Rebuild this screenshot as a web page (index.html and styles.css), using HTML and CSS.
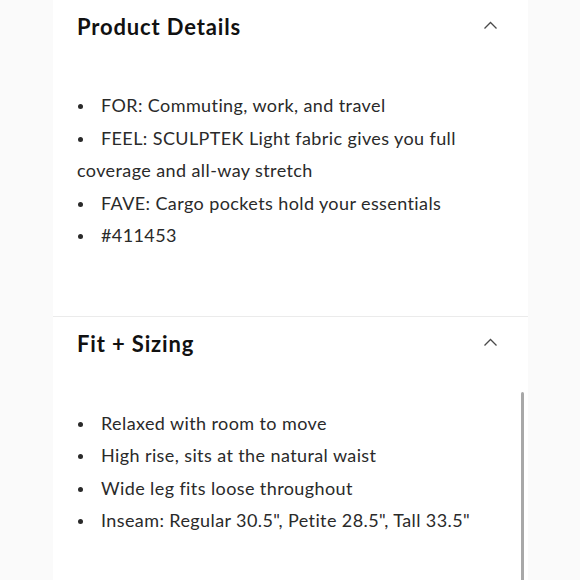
FILE: index.html
```html
<!DOCTYPE html>
<html>
<head>
<meta charset="utf-8">
<link rel="stylesheet" href="styles.css">
</head>
<body>
<div class="panel">
  <section class="acc">
    <div class="acc-head">
      <h2 class="acc-title">Product Details</h2>
      <svg class="chev" width="15" height="9" viewBox="0 0 15 9"><path d="M1.5 7.5 L7.5 1.5 L13.5 7.5" fill="none" stroke="#4a4a4a" stroke-width="1.3"/></svg>
    </div>
    <div class="acc-body">
      <p class="item"><span class="dot"></span>FOR: Commuting, work, and travel</p>
      <p class="item"><span class="dot"></span>FEEL: SCULPTEK Light fabric gives you full coverage and all-way stretch</p>
      <p class="item"><span class="dot"></span>FAVE: Cargo pockets hold your essentials</p>
      <p class="item"><span class="dot"></span>#411453</p>
    </div>
  </section>
  <section class="acc acc-second">
    <div class="acc-head">
      <h2 class="acc-title">Fit + Sizing</h2>
      <svg class="chev" width="15" height="9" viewBox="0 0 15 9"><path d="M1.5 7.5 L7.5 1.5 L13.5 7.5" fill="none" stroke="#4a4a4a" stroke-width="1.3"/></svg>
    </div>
    <div class="acc-body">
      <p class="item"><span class="dot"></span>Relaxed with room to move</p>
      <p class="item"><span class="dot"></span>High rise, sits at the natural waist</p>
      <p class="item"><span class="dot"></span>Wide leg fits loose throughout</p>
      <p class="item"><span class="dot"></span>Inseam: Regular 30.5", Petite 28.5", Tall 33.5"</p>
    </div>
  </section>
  <div class="scrollbar"></div>
</div>
</body>
</html>
```
FILE: styles.css
```css
html, body {
  margin: 0;
  padding: 0;
  background: #fafafa;
  height: 580px;
  overflow: hidden;
}
.panel {
  position: relative;
  margin-left: 53px;
  width: 475px;
  height: 580px;
  background: #fff;
  font-family: "Lato", "Liberation Sans", sans-serif;
  color: #2a2a2a;
}
.acc-head {
  display: flex;
  align-items: center;
  justify-content: space-between;
  height: 52px;
  padding: 0 30px 0 24px;
}
.acc-title {
  margin: 0;
  font-size: 22px;
  font-weight: 700;
  letter-spacing: 0.85px;
  color: #111;
}
.chev {
  display: block;
  margin-top: -2px;
}
.acc-body {
  padding: 37px 30px 64px 24px;
}
.item {
  margin: 0;
  font-size: 18px;
  line-height: 32.5px;
  letter-spacing: 0.4px;
}
.dot {
  display: inline-block;
  width: 24px;
  position: relative;
  height: 10px;
}
.dot::before {
  content: "";
  position: absolute;
  left: 1px;
  top: 2px;
  width: 5px;
  height: 5px;
  border-radius: 50%;
  background: #2a2a2a;
}
.acc-second {
  border-top: 1px solid #ebebeb;
}
.acc-second .acc-head {
  margin-top: 1px;
}
.scrollbar {
  position: absolute;
  left: 468px;
  top: 392px;
  width: 3px;
  height: 200px;
  border-radius: 2px;
  background: #a8a8a8;
}
```
